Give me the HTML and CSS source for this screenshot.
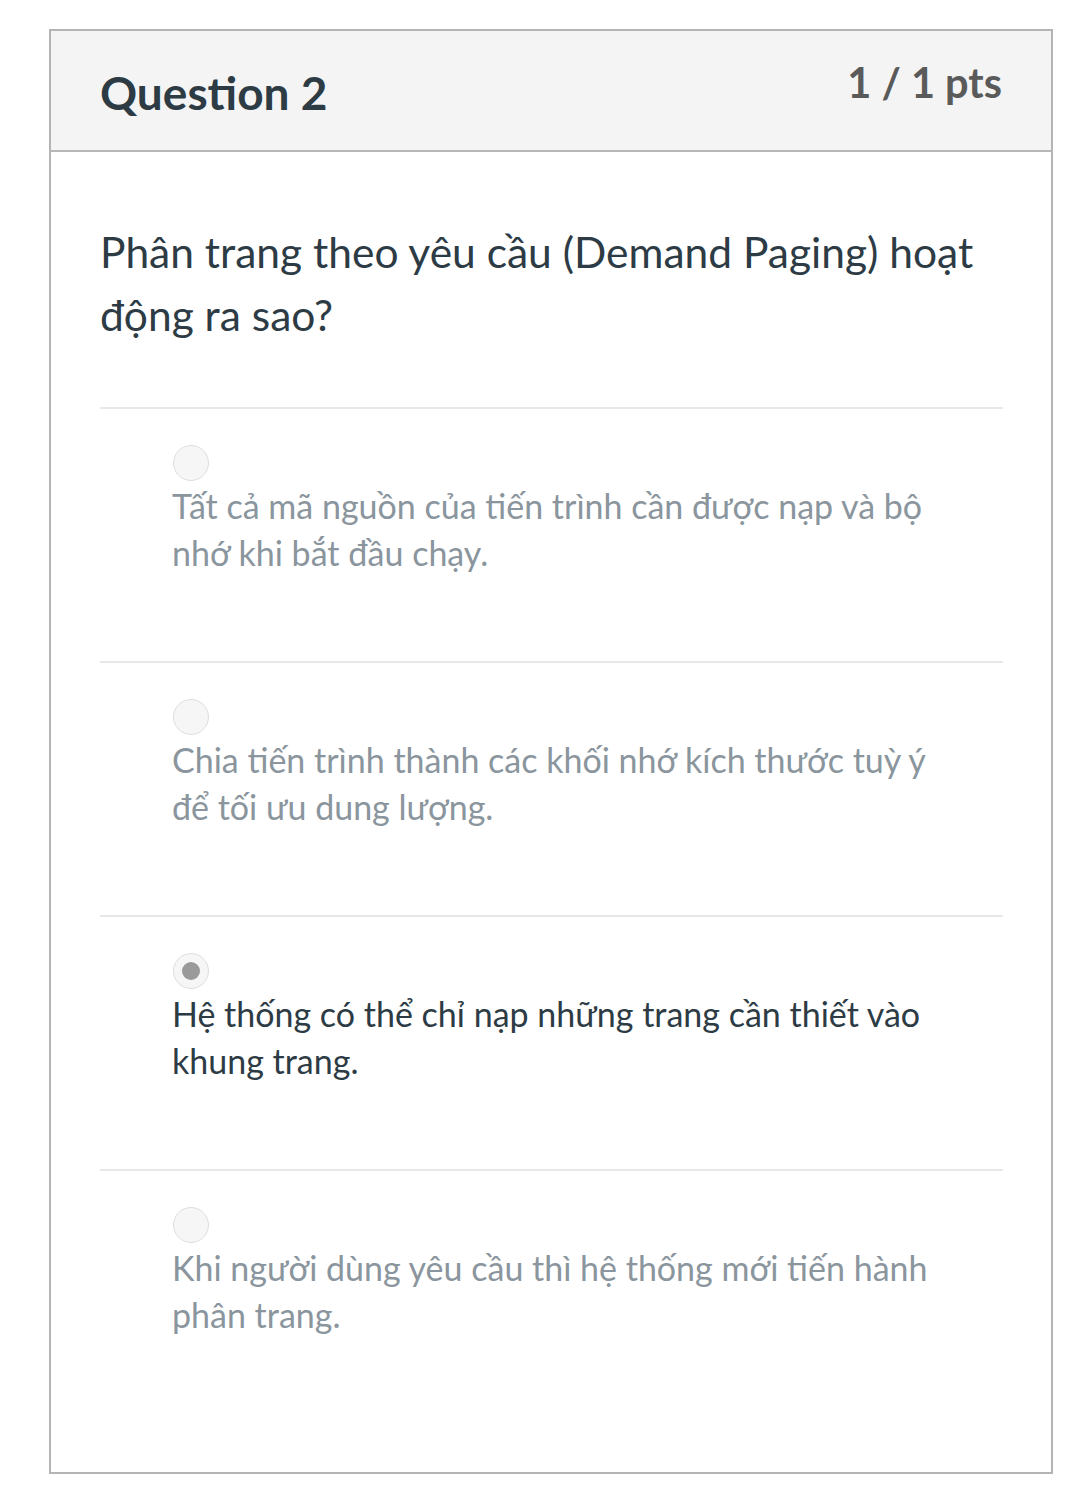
FILE: index.html
```html
<!DOCTYPE html>
<html lang="vi">
<head>
<meta charset="utf-8">
<link rel="stylesheet" href="styles.css">
</head>
<body>
<div class="card">
  <div class="header">
    <h2 class="title">Question 2</h2>
    <div class="pts">1 / 1 pts</div>
  </div>
  <div class="body">
    <div class="question">Phân trang theo yêu cầu (Demand Paging) hoạt động ra sao?</div>
    <div class="answer">
      <span class="radio"></span>
      <div class="atext">Tất cả mã nguồn của tiến trình cần được nạp và bộ nhớ khi bắt đầu chạy.</div>
    </div>
    <div class="answer">
      <span class="radio"></span>
      <div class="atext">Chia tiến trình thành các khối nhớ kích thước tuỳ ý để tối ưu dung lượng.</div>
    </div>
    <div class="answer selected">
      <span class="radio"><span class="dot"></span></span>
      <div class="atext">Hệ thống có thể chỉ nạp những trang cần thiết vào khung trang.</div>
    </div>
    <div class="answer">
      <span class="radio"></span>
      <div class="atext">Khi người dùng yêu cầu thì hệ thống mới tiến hành phân trang.</div>
    </div>
  </div>
</div>
</body>
</html>
```
FILE: styles.css
```css
html, body {
  margin: 0;
  padding: 0;
  background: #ffffff;
}
body {
  font-family: Lato, "Noto Sans", sans-serif;
  color: #2d3b45;
  padding-top: 29px;
  padding-left: 49px;
}
.card {
  width: 1000px;
  height: 1441px;
  border: 2px solid #b4b4b4;
  background: #fff;
}
.header {
  height: 119px;
  background: #f4f4f4;
  border-bottom: 2px solid #b8b8b8;
  display: flex;
  justify-content: space-between;
  align-items: flex-start;
  padding: 0 49px;
}
.title {
  margin: 0;
  margin-top: 34px;
  font-size: 46px;
  font-weight: 700;
  line-height: 56px;
  color: #2d3b45;
}
.pts {
  margin-top: 23px;
  font-size: 41.5px;
  font-weight: 700;
  line-height: 56px;
  color: #5a5a5a;
}
.body {
  padding: 68px 48px 0 49px;
}
.question {
  font-size: 42.5px;
  line-height: 63px;
  color: #2d3b45;
  padding-bottom: 61px;
  border-bottom: 2px solid #e8e8e8;
  padding-right: 10px;
}
.answer {
  padding: 36px 60px 85px 72px;
  border-bottom: 2px solid #e8e8e8;
  display: flex;
  flex-direction: column;
  align-items: flex-start;
}
.answer:last-child {
  border-bottom: none;
}
.radio {
  width: 34px;
  height: 34px;
  border-radius: 50%;
  border: 1px solid #dedede;
  background: #f6f6f6;
  display: flex;
  align-items: center;
  justify-content: center;
  margin-left: 1px;
}
.dot {
  width: 18px;
  height: 18px;
  border-radius: 50%;
  background: #9a9a9a;
}
.atext {
  font-size: 34px;
  line-height: 47px;
  color: #8a959d;
  margin-top: 1px;
}
.selected .atext {
  color: #2d3b45;
}
```
